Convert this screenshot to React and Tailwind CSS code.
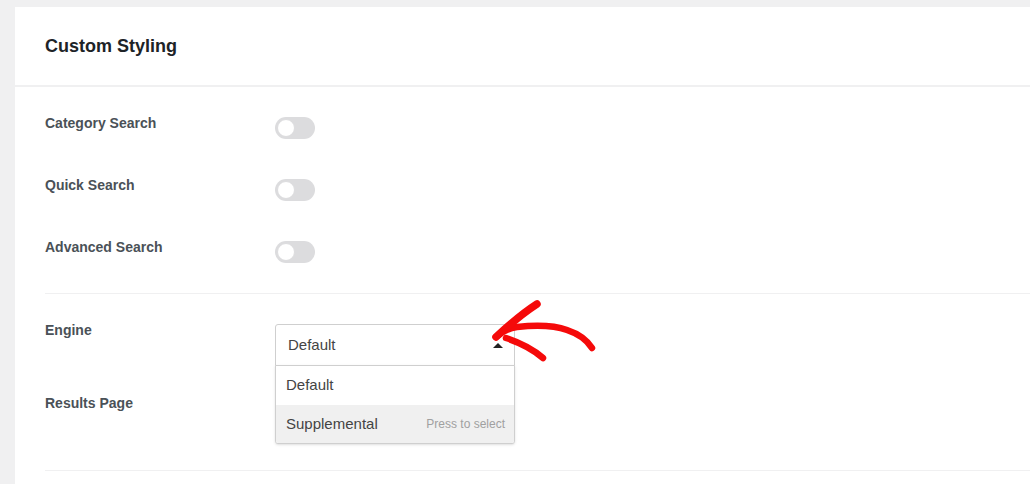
import React from "react";

const Toggle = () => (
  <div className="mt-[3px] h-[22px] w-[40px] rounded-full bg-[#dcdcde] p-[2px]">
    <div className="h-[18px] w-[18px] rounded-full border border-[#dcdcde] bg-white" />
  </div>
);

const toggles = ["Category Search", "Quick Search", "Advanced Search"];

const Arrow = () => (
  <svg
    className="pointer-events-none absolute left-0 top-0"
    width="1030"
    height="484"
    viewBox="0 0 1030 484"
    fill="none"
  >
    <g stroke="#f50a0a" strokeLinecap="round" strokeLinejoin="round">
      <path d="M496 337 C503 331 509 328 517 327 C536 325 553 325 567 330 C579 334 587 340 592 348" strokeWidth="6.5" />
      <path d="M496 337 C509 325 523 313 537 304" strokeWidth="7.5" />
      <path d="M506 338 C521 343 534 350 543 358" strokeWidth="6.5" />
    </g>
  </svg>
);

export default function App() {
  return (
    <div
      className="relative flex h-[484px] w-[1030px] overflow-hidden bg-[#f0f0f1] pl-[15px] pt-[7px]"
      style={{ fontFamily: '"Liberation Sans", Arial, sans-serif' }}
    >
      <div className="flex-1 bg-white">
        <div className="flex h-[80px] items-center border-b-2 border-[#f0f0f1] pl-[30px]">
          <h2 className="text-[18px] font-bold text-[#1d2327]">Custom Styling</h2>
        </div>

        <div className="pl-[30px]">
          <div className="flex flex-col gap-[37px] border-b border-[#f0f0f1] pb-[30px] pt-[27px]">
            {toggles.map((label) => (
              <div key={label} className="flex items-start">
                <div className="w-[230px] text-[14px] font-bold leading-[18px] text-[#4a5157]">
                  {label}
                </div>
                <Toggle />
              </div>
            ))}
          </div>

          <div className="border-b border-[#f0f0f1] pb-[58px] pt-[27px]">
            <div className="flex items-start">
              <div className="w-[230px] text-[14px] font-bold leading-[18px] text-[#4a5157]">
                Engine
              </div>
              <div className="relative mt-[3px] w-[240px]">
                <div className="flex h-[42px] items-center justify-between rounded-t-[3px] border border-[#cfcfcf] bg-white pl-[12px] pr-[11px]">
                  <span className="text-[15px] text-[#444]">Default</span>
                  <span className="h-0 w-0 border-x-[5px] border-b-[5px] border-x-transparent border-b-[#222]" />
                </div>
                <div className="absolute left-0 right-0 top-[41px] z-10 overflow-hidden rounded-b-[3px] border border-[#cfcfcf] bg-white shadow-sm">
                  <div className="flex h-[39px] items-center px-[10px] text-[15px] text-[#444]">
                    Default
                  </div>
                  <div className="flex h-[38px] items-center justify-between bg-[#f0f0f0] pl-[10px] pr-[9px]">
                    <span className="text-[15px] text-[#444]">Supplemental</span>
                    <span className="text-[12px] text-[#a0a0a0]">Press to select</span>
                  </div>
                </div>
              </div>
            </div>
            <div className="mt-[28px] w-[230px] text-[14px] font-bold leading-[18px] text-[#4a5157]">
              Results Page
            </div>
          </div>
        </div>
      </div>
      <Arrow />
    </div>
  );
}
